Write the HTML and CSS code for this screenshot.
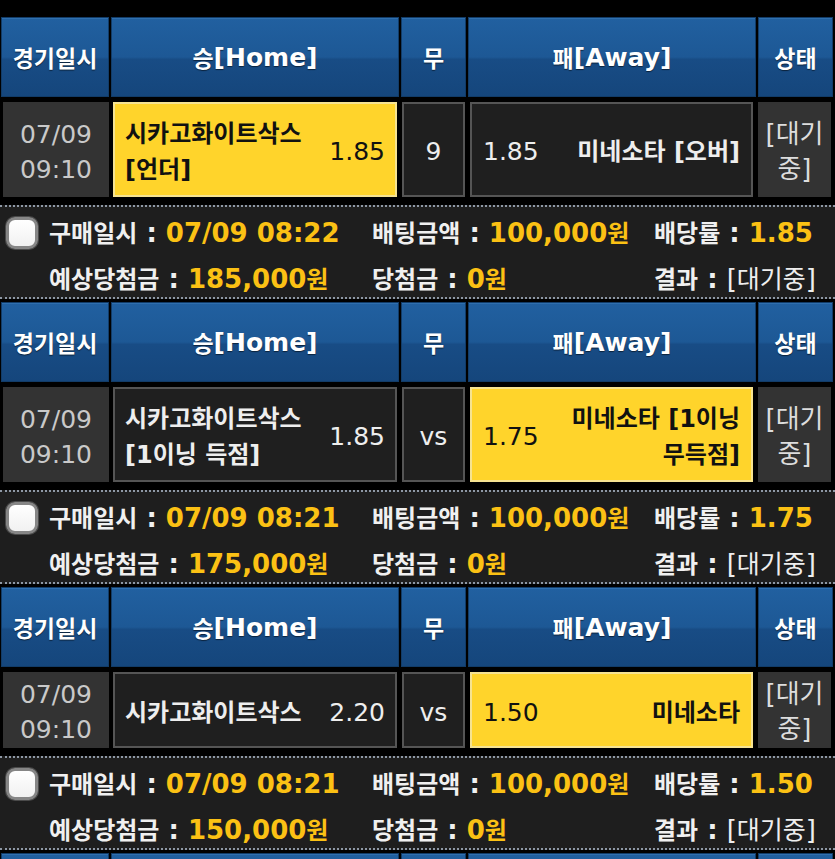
FILE: index.html
```html
<!DOCTYPE html>
<html lang="ko">
<head>
<meta charset="utf-8">
<title>배팅내역</title>
<link rel="stylesheet" href="styles.css">
</head>
<body>
<div class="page">

  <section class="bet">
    <div class="grid head">
      <div class="th"><span class="k">경기일시</span></div>
      <div class="th"><span class="k">승</span>[Home]</div>
      <div class="th"><span class="k">무</span></div>
      <div class="th"><span class="k">패</span>[Away]</div>
      <div class="th"><span class="k">상태</span></div>
    </div>
    <div class="grid row">
      <div class="td date">07/09<br>09:10</div>
      <div class="td pick home on"><span class="team">시카고화이트삭스<br>[언더]</span><span class="odd">1.85</span></div>
      <div class="td draw">9</div>
      <div class="td pick away"><span class="odd">1.85</span><span class="team">미네소타 [오버]</span></div>
      <div class="td status">[대기<br>중]</div>
    </div>
    <div class="info">
      <div class="chk"></div>
      <div><span class="k">구매일시</span> : <span class="v">07/09 08:22</span></div>
      <div><span class="k">배팅금액</span> : <span class="v">100,000<span class="k">원</span></span></div>
      <div><span class="k">배당률</span> : <span class="v">1.85</span></div>
      <div></div>
      <div><span class="k">예상당첨금</span> : <span class="v">185,000<span class="k">원</span></span></div>
      <div><span class="k">당첨금</span> : <span class="v">0<span class="k">원</span></span></div>
      <div><span class="k">결과</span> : <span class="w">[<span class="k">대기중</span>]</span></div>
    </div>
  </section>

  <section class="bet">
    <div class="grid head">
      <div class="th"><span class="k">경기일시</span></div>
      <div class="th"><span class="k">승</span>[Home]</div>
      <div class="th"><span class="k">무</span></div>
      <div class="th"><span class="k">패</span>[Away]</div>
      <div class="th"><span class="k">상태</span></div>
    </div>
    <div class="grid row">
      <div class="td date">07/09<br>09:10</div>
      <div class="td pick home"><span class="team">시카고화이트삭스<br>[1이닝 득점]</span><span class="odd">1.85</span></div>
      <div class="td draw">vs</div>
      <div class="td pick away on"><span class="odd">1.75</span><span class="team right">미네소타 [1이닝<br>무득점]</span></div>
      <div class="td status">[대기<br>중]</div>
    </div>
    <div class="info">
      <div class="chk"></div>
      <div><span class="k">구매일시</span> : <span class="v">07/09 08:21</span></div>
      <div><span class="k">배팅금액</span> : <span class="v">100,000<span class="k">원</span></span></div>
      <div><span class="k">배당률</span> : <span class="v">1.75</span></div>
      <div></div>
      <div><span class="k">예상당첨금</span> : <span class="v">175,000<span class="k">원</span></span></div>
      <div><span class="k">당첨금</span> : <span class="v">0<span class="k">원</span></span></div>
      <div><span class="k">결과</span> : <span class="w">[<span class="k">대기중</span>]</span></div>
    </div>
  </section>

  <section class="bet">
    <div class="grid head">
      <div class="th"><span class="k">경기일시</span></div>
      <div class="th"><span class="k">승</span>[Home]</div>
      <div class="th"><span class="k">무</span></div>
      <div class="th"><span class="k">패</span>[Away]</div>
      <div class="th"><span class="k">상태</span></div>
    </div>
    <div class="grid row">
      <div class="td date">07/09<br>09:10</div>
      <div class="td pick home"><span class="team">시카고화이트삭스</span><span class="odd">2.20</span></div>
      <div class="td draw">vs</div>
      <div class="td pick away on"><span class="odd">1.50</span><span class="team right">미네소타</span></div>
      <div class="td status">[대기<br>중]</div>
    </div>
    <div class="info">
      <div class="chk"></div>
      <div><span class="k">구매일시</span> : <span class="v">07/09 08:21</span></div>
      <div><span class="k">배팅금액</span> : <span class="v">100,000<span class="k">원</span></span></div>
      <div><span class="k">배당률</span> : <span class="v">1.50</span></div>
      <div></div>
      <div><span class="k">예상당첨금</span> : <span class="v">150,000<span class="k">원</span></span></div>
      <div><span class="k">당첨금</span> : <span class="v">0<span class="k">원</span></span></div>
      <div><span class="k">결과</span> : <span class="w">[<span class="k">대기중</span>]</span></div>
    </div>
  </section>

  <section class="bet">
    <div class="grid head">
      <div class="th"></div>
      <div class="th"></div>
      <div class="th"></div>
      <div class="th"></div>
      <div class="th"></div>
    </div>
  </section>

</div>
</body>
</html>
```
FILE: styles.css
```css
html, body {
  margin: 0;
  background: #000;
}

body {
  font-family: "DejaVu Sans", "Noto Sans CJK KR", sans-serif;
  color: #eee;
}

.page {
  padding-top: 17px;
}

.bet {
  margin-bottom: 3px;
}

.grid {
  display: grid;
  grid-template-columns: 108px 288px 65px 288px 75px;
  column-gap: 2px;
  padding-left: 1px;
}

/* header */
.head {
  height: 80px;
}

.th {
  box-sizing: border-box;
  display: flex;
  align-items: center;
  justify-content: center;
  border: 1px solid #123c68;
  background: linear-gradient(to bottom, #2160a0 0%, #1d5895 50%, #184c85 53%, #15467c 100%);
  box-shadow: inset 0 1px 0 #2f6fae;
  color: #fff;
  font-size: 25px;
  font-weight: bold;
  text-shadow: 0 1px 1px rgba(0, 0, 0, 0.55);
  white-space: nowrap;
}

.th .k {
  font-size: 23px;
}

/* match row */
.row {
  margin-top: 5px;
}

.td {
  box-sizing: border-box;
  display: flex;
  align-items: center;
  font-size: 25px;
  line-height: 35px;
}

.date {
  margin-left: 2px;
  padding: 5px 0 1px;
  justify-content: center;
  text-align: center;
  background: #333;
  color: #c9c9c9;
}

.pick {
  justify-content: space-between;
  padding: 12px 10px 7px 10px;
  line-height: 36px;
  border: 2px solid #555;
  background: #1f1f1f;
  color: #eee;
}

.pick.on {
  background: #ffd42b;
  border-color: #f6e391;
  color: #111;
}

.home {
  margin: 0 2px;
}

.away {
  margin: 0 3px 0 2px;
  padding-left: 11px;
  padding-right: 11px;
}

.team {
  font-size: 24px;
  font-weight: bold;
  white-space: nowrap;
}

.team.right {
  text-align: right;
}

.odd {
  white-space: nowrap;
}

.draw {
  margin: 0 1px;
  padding-top: 4px;
  justify-content: center;
  border: 2px solid #555;
  background: #1f1f1f;
  color: #eee;
}

.status {
  margin-right: 2px;
  padding: 5px 0 1px;
  justify-content: center;
  text-align: center;
  background: #333;
  color: #ddd;
  font-size: 26px;
}

/* purchase info */
.info {
  margin-top: 8px;
  box-sizing: content-box;
  height: 87px;
  display: grid;
  grid-template-columns: 43px 323px 282px 1fr;
  grid-template-rows: 46px 46px;
  align-content: start;
  padding: 3px 0 0 6px;
  background: #1e1e1e;
  border-top: 2px dotted #8e98a5;
  border-bottom: 2px dotted #8e98a5;
  font-size: 26px;
  font-weight: bold;
  line-height: 46px;
  color: #f0f0f0;
  white-space: nowrap;
}

.info .k {
  font-size: 24px;
}

.v {
  color: #fbc114;
}

.w {
  font-weight: normal;
  color: #eee;
}

.info .w .k {
  font-size: 25px;
}

.chk {
  box-sizing: border-box;
  align-self: center;
  width: 32px;
  height: 32px;
  border: 3px solid #868686;
  border-radius: 9px;
  background: linear-gradient(to bottom, #fff, #f1f1f1);
  box-shadow: 0 0 0 1px #4a4a4a;
}
```
